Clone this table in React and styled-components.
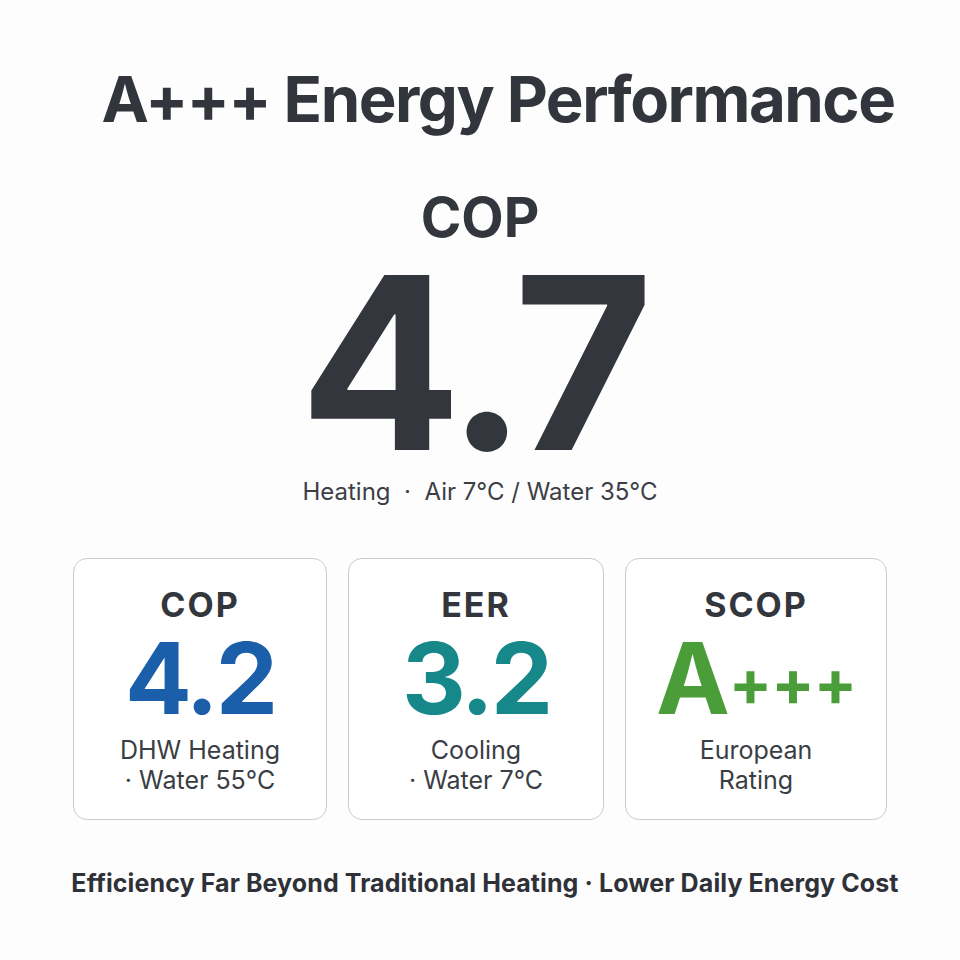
import React from 'react';
import styled, { createGlobalStyle } from 'styled-components';

const GlobalStyle = createGlobalStyle`
  html, body {
    margin: 0;
    padding: 0;
    background: #fdfdfd;
  }
  body {
    font-family: 'Inter', 'Liberation Sans', sans-serif;
    color: #33363c;
  }
`;

// Card data
const cards = [
  { id: 'cop', label: 'COP', value: '4.2', color: '#1b5ea9', width: 254, lines: ['DHW Heating', '· Water 55°C'] },
  { id: 'eer', label: 'EER', value: '3.2', color: '#17888a', width: 256, lines: ['Cooling', '· Water 7°C'] },
  { id: 'scop', label: 'SCOP', value: 'A+++', color: '#4a9d38', width: 262, lines: ['European', 'Rating'], rating: true },
];

const App = () => {
  return (
    <Page>
      <GlobalStyle />
      <Title>A+++ Energy Performance</Title>

      <Hero>
        <HeroLabel>COP</HeroLabel>
        <HeroValue>4.7</HeroValue>
        <HeroNote>Heating&nbsp; · &nbsp;Air 7°C / Water 35°C</HeroNote>
      </Hero>

      <CardRow>
        {cards.map((card) => (
          <Card key={card.id} $width={card.width}>
            <CardLabel>{card.label}</CardLabel>
            <CardValue $color={card.color}>
              {card.rating ? (
                <>
                  A<Plus>+++</Plus>
                </>
              ) : (
                card.value
              )}
            </CardValue>
            <CardNote>
              {card.lines.map((line) => (
                <div key={line}>{line}</div>
              ))}
            </CardNote>
          </Card>
        ))}
      </CardRow>

      <Footer>Efficiency Far Beyond Traditional Heating · Lower Daily Energy Cost</Footer>
    </Page>
  );
};

export default App;

// Styled Components

const Page = styled.div`
  width: 960px;
  height: 960px;
  box-sizing: border-box;
  padding-top: 67px;
  display: flex;
  flex-direction: column;
  align-items: center;
`;

const Title = styled.h1`
  margin: 0 0 0 36px;
  font-size: 63.5px;
  line-height: 1;
  font-weight: 700;
  letter-spacing: -1.5px;
  color: #32353b;
`;

const Hero = styled.section`
  margin-top: 59px;
  display: flex;
  flex-direction: column;
  align-items: center;
`;

const HeroLabel = styled.div`
  font-size: 55px;
  line-height: 1;
  font-weight: 700;
  color: #33363c;
`;

const HeroValue = styled.div`
  margin: -2px 14px 0 0;
  font-size: 240px;
  line-height: 1;
  font-weight: 700;
  letter-spacing: -7px;
  color: #33363c;
`;

const HeroNote = styled.div`
  margin-top: -3px;
  font-size: 24px;
  line-height: 1;
  font-weight: 400;
  color: #3c4046;
`;

const CardRow = styled.div`
  margin-top: 54px;
  display: flex;
  gap: 21px;
`;

const Card = styled.div`
  width: ${({ $width }) => $width}px;
  height: 262px;
  box-sizing: border-box;
  padding-top: 29px;
  border: 1.5px solid #c9ccd1;
  border-radius: 14px;
  background: #ffffff;
  display: flex;
  flex-direction: column;
  align-items: center;
`;

const CardLabel = styled.div`
  font-size: 34px;
  line-height: 1;
  font-weight: 700;
  letter-spacing: 2px;
  color: #33363c;
`;

const CardValue = styled.div`
  margin-top: 7px;
  font-size: 99px;
  line-height: 1;
  font-weight: 700;
  letter-spacing: -3px;
  color: ${({ $color }) => $color};
  display: flex;
  align-items: center;
`;

const Plus = styled.span`
  font-size: 64px;
  margin-top: 10px;
  margin-left: 2px;
  letter-spacing: -1px;
`;

const CardNote = styled.div`
  margin-top: 7px;
  font-size: 25px;
  line-height: 30px;
  text-align: center;
  color: #3a3e44;
`;

const Footer = styled.div`
  margin: 51px 0 0 10px;
  font-size: 25px;
  line-height: 1;
  font-weight: 700;
  letter-spacing: 0.1px;
  color: #2e3137;
`;
